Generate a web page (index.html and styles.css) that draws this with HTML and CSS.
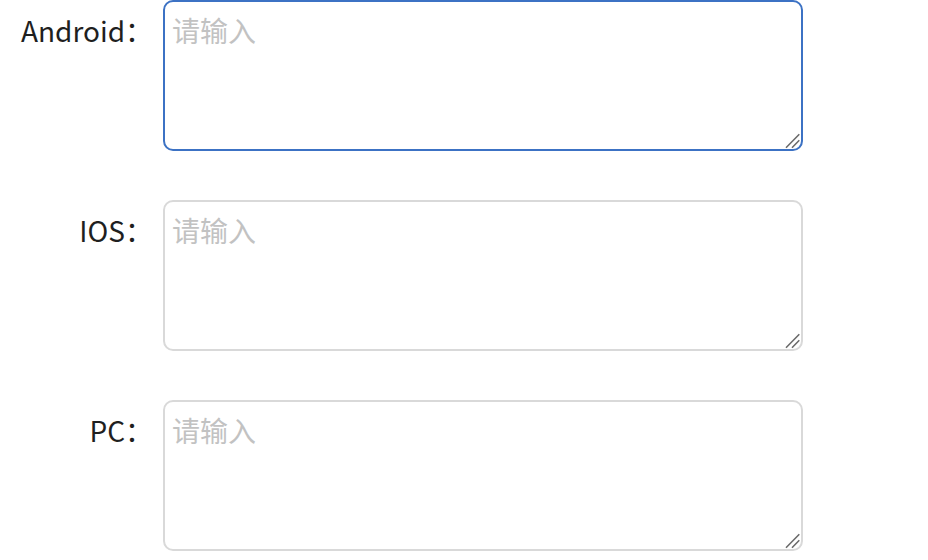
FILE: index.html
```html
<!DOCTYPE html>
<html lang="zh-CN">
<head>
<meta charset="utf-8">
<link rel="stylesheet" href="styles.css">
</head>
<body>
<form class="form">
  <div class="form-item">
    <label class="form-label" for="android">Android：</label>
    <div class="form-content">
      <textarea id="android" class="textarea is-focus" placeholder="请输入"></textarea>
      <svg class="resizer" width="20" height="20" viewBox="0 0 20 20" aria-hidden="true"><path d="M3 16.7L16.3 3.3M9 16.7L16.3 9.3"/></svg>
    </div>
  </div>
  <div class="form-item">
    <label class="form-label" for="ios">IOS：</label>
    <div class="form-content">
      <textarea id="ios" class="textarea" placeholder="请输入"></textarea>
      <svg class="resizer" width="20" height="20" viewBox="0 0 20 20" aria-hidden="true"><path d="M3 16.7L16.3 3.3M9 16.7L16.3 9.3"/></svg>
    </div>
  </div>
  <div class="form-item">
    <label class="form-label" for="pc">PC：</label>
    <div class="form-content">
      <textarea id="pc" class="textarea" placeholder="请输入"></textarea>
      <svg class="resizer" width="20" height="20" viewBox="0 0 20 20" aria-hidden="true"><path d="M3 16.7L16.3 3.3M9 16.7L16.3 9.3"/></svg>
    </div>
  </div>
</form>
</body>
</html>
```
FILE: styles.css
```css
html, body {
  margin: 0;
  padding: 0;
  background: #ffffff;
}
body {
  font-family: "Noto Sans CJK SC", "Noto Sans", sans-serif;
  font-size: 28px;
  color: #1f1f1f;
}
.form {
  display: flex;
  flex-direction: column;
  gap: 49px;
}
.form-item {
  display: flex;
  align-items: flex-start;
}
.form-label {
  width: 165px;
  box-sizing: border-box;
  padding-right: 12px;
  padding-top: 12px;
  line-height: 36px;
  text-align: right;
  flex-shrink: 0;
}
.form-content {
  position: relative;
  margin-left: -2px;
  flex: 0 0 640px;
}
.textarea {
  display: block;
  box-sizing: border-box;
  width: 640px;
  height: 151px;
  margin: 0;
  padding: 8px 7px;
  border: 2px solid #d9d9d9;
  border-radius: 10px;
  font-family: inherit;
  font-size: 28px;
  line-height: 40px;
  color: #1f1f1f;
  background: #ffffff;
  outline: none;
  resize: none;
}
.textarea::placeholder {
  color: #c2c2c2;
}
.textarea.is-focus {
  border-color: #3c72c4;
}
.resizer {
  position: absolute;
  right: 0;
  bottom: 0;
  pointer-events: none;
}
.resizer path {
  fill: none;
  stroke: #6b6b6b;
  stroke-width: 1.6;
}
```
